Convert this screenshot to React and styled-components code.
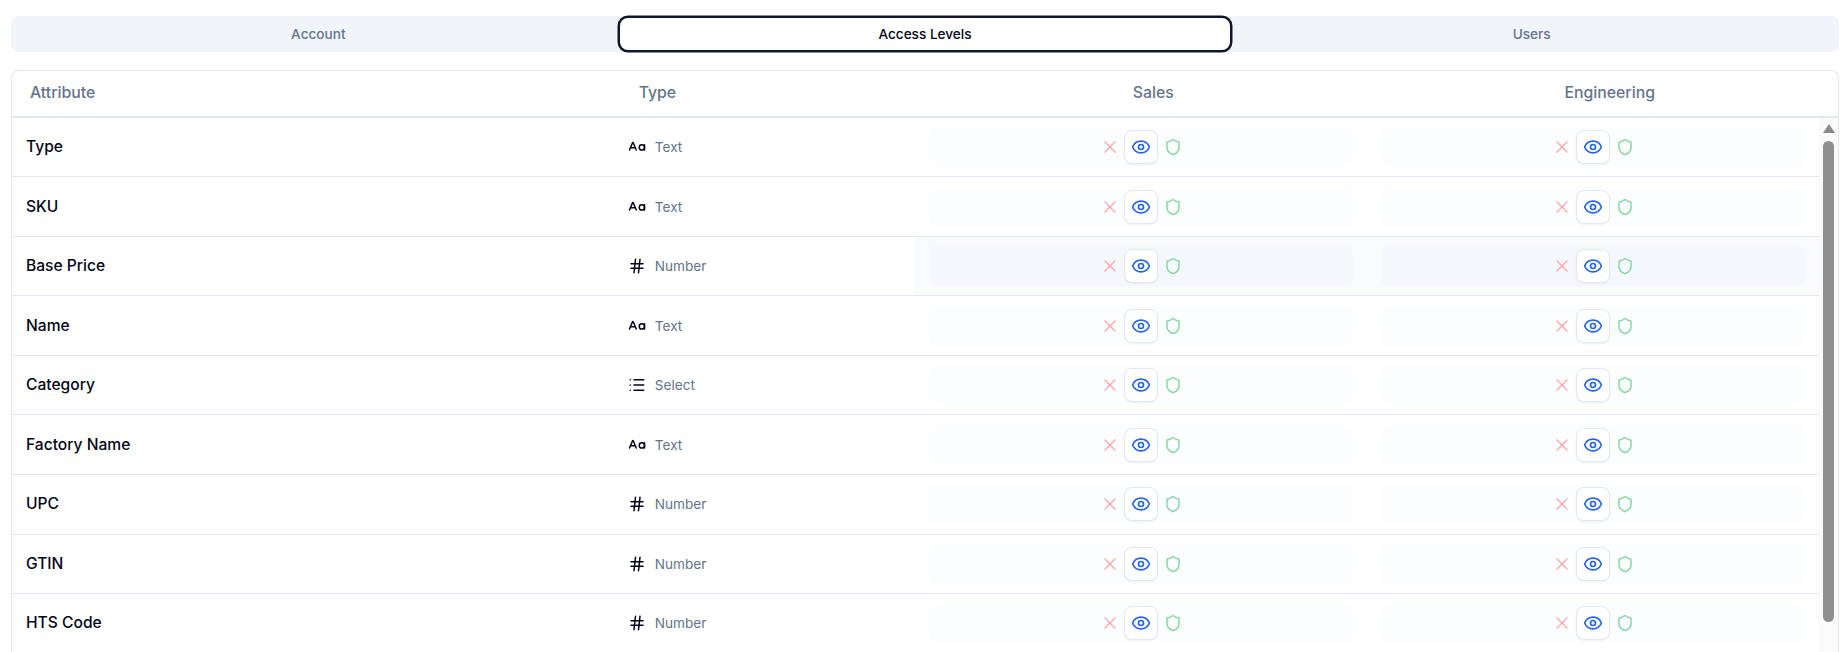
import React from "react";
import styled, { createGlobalStyle } from "styled-components";
import { CaseSensitive, Eye, Hash, List, Shield, X } from "lucide-react";

const GlobalStyle = createGlobalStyle`
  html, body {
    margin: 0;
    height: 100%;
    background: #fff;
    overflow: hidden;
  }
  body {
    font-family: Inter, "Liberation Sans", sans-serif;
  }
`;

const Page = styled.div`
  height: 100vh;
  box-sizing: border-box;
  padding: 16px 8px 0 11px;
  display: flex;
  flex-direction: column;
  gap: 18px;
  overflow: hidden;
`;

const TabBar = styled.div`
  height: 36px;
  box-sizing: border-box;
  flex: none;
  padding: 4px;
  display: grid;
  grid-template-columns: repeat(3, 1fr);
  background: #f1f5f9;
  border-radius: 8px;
`;

const Tab = styled.button`
  border: 0;
  padding: 0;
  border-radius: 6px;
  font: 500 13.6px Inter, sans-serif;
  cursor: pointer;
  background: ${(p) => (p.$active ? "#fff" : "transparent")};
  color: ${(p) => (p.$active ? "#020617" : "#64748b")};
  box-shadow: ${(p) =>
    p.$active ? "0 0 0 2px #fff, 0 0 0 4.5px #0f172a" : "none"};
`;

const Card = styled.div`
  flex: 1;
  min-height: 0;
  display: flex;
  flex-direction: column;
  border: 1px solid #e2e8f0;
  border-bottom: 0;
  border-radius: 8px 8px 0 0;
  overflow: hidden;
`;

const HeadRow = styled.div`
  flex: none;
  height: 46.7px;
  box-sizing: border-box;
  padding-bottom: 2px;
  display: grid;
  grid-template-columns: 2fr 1fr 1.5fr 1.5fr;
  align-items: center;
  border-bottom: 2px solid #e2e8f0;
`;

const HeadCell = styled.div`
  padding: 0 18px;
  font-size: 15.8px;
  font-weight: 500;
  color: #64748b;
  text-align: ${(p) => (p.$center ? "center" : "left")};
`;

const Body = styled.div`
  flex: 1;
  min-height: 0;
  display: flex;
`;

const Rows = styled.div`
  flex: 1;
  min-width: 0;
`;

const Row = styled.div`
  height: 59.55px;
  box-sizing: border-box;
  display: grid;
  grid-template-columns: 2fr 1fr 1.5fr 1.5fr;
  align-items: stretch;
  border-bottom: 1px solid #e2e8f0;
`;

const NameCell = styled.div`
  display: flex;
  align-items: center;
  padding: 0 0 1px 14px;
  font-size: 15.6px;
  font-weight: 500;
  color: #020617;
`;

const TypeCell = styled.div`
  display: flex;
  align-items: center;
  gap: 8.5px;
  padding-left: 14px;
  font-size: 13.6px;
  color: #64748b;
`;

const TypeIcon = styled.span`
  width: 18px;
  display: flex;
  justify-content: center;
  color: #020617;
`;

const AccessCell = styled.div`
  display: flex;
  align-items: center;
  padding: 0 14px;
  background: ${(p) => (p.$hovered ? "#f8fafc" : "transparent")};
`;

const AccessInner = styled.div`
  flex: 1;
  height: 40px;
  display: flex;
  align-items: center;
  justify-content: center;
  gap: 4px;
  border-radius: 8px;
  background: rgba(219, 234, 254, 0.1);
`;

const LevelSlot = styled.span`
  width: 20px;
  display: flex;
  justify-content: center;
  color: ${(p) => p.$color};
`;

const ShieldSlot = styled(LevelSlot)`
  margin: 0 -1px 0 1px;
`;

const ActiveLevel = styled.span`
  width: 34px;
  height: 34px;
  box-sizing: border-box;
  display: flex;
  align-items: center;
  justify-content: center;
  background: #fff;
  border: 1px solid #e2e8f0;
  border-radius: 8px;
  box-shadow: 0 1px 2px rgba(15, 23, 42, 0.05);
  color: #2563eb;
`;

const ScrollRail = styled.div`
  flex: none;
  width: 19px;
  background: #fafafa;
  display: flex;
  flex-direction: column;
  align-items: center;
  padding-top: 6px;
`;

const ScrollArrow = styled.span`
  width: 0;
  height: 0;
  border-left: 6.5px solid transparent;
  border-right: 6.5px solid transparent;
  border-bottom: 9px solid #8a8a8a;
`;

const ScrollThumb = styled.div`
  width: 11px;
  height: 481px;
  margin-top: 8px;
  background: #8f8f8f;
  border-radius: 6px;
`;

const typeIcons = {
  Text: <CaseSensitive size={18} />,
  Number: <Hash size={18} />,
  Select: <List size={18} />,
};

const attributes = [
  ["Type", "Text"],
  ["SKU", "Text"],
  ["Base Price", "Number"],
  ["Name", "Text"],
  ["Category", "Select"],
  ["Factory Name", "Text"],
  ["UPC", "Number"],
  ["GTIN", "Number"],
  ["HTS Code", "Number"],
];

const Access = ({ hovered }) => (
  <AccessCell $hovered={hovered}>
    <AccessInner>
      <LevelSlot $color="#fca5a5">
        <X size={20} strokeWidth={1.5} />
      </LevelSlot>
      <ActiveLevel>
        <Eye size={20} />
      </ActiveLevel>
      <ShieldSlot $color="#86d7a2">
        <Shield size={18} />
      </ShieldSlot>
    </AccessInner>
  </AccessCell>
);

export default function App() {
  return (
    <Page>
      <GlobalStyle />
      <TabBar>
        <Tab>Account</Tab>
        <Tab $active>Access Levels</Tab>
        <Tab>Users</Tab>
      </TabBar>
      <Card>
        <HeadRow>
          <HeadCell>Attribute</HeadCell>
          <HeadCell>Type</HeadCell>
          <HeadCell $center>Sales</HeadCell>
          <HeadCell $center>Engineering</HeadCell>
        </HeadRow>
        <Body>
          <Rows>
            {attributes.map(([name, type]) => {
              const hovered = name === "Base Price";
              return (
                <Row key={name}>
                  <NameCell>{name}</NameCell>
                  <TypeCell>
                    <TypeIcon>{typeIcons[type]}</TypeIcon>
                    {type}
                  </TypeCell>
                  <Access hovered={hovered} />
                  <Access hovered={hovered} />
                </Row>
              );
            })}
          </Rows>
          <ScrollRail>
            <ScrollArrow />
            <ScrollThumb />
          </ScrollRail>
        </Body>
      </Card>
    </Page>
  );
}
